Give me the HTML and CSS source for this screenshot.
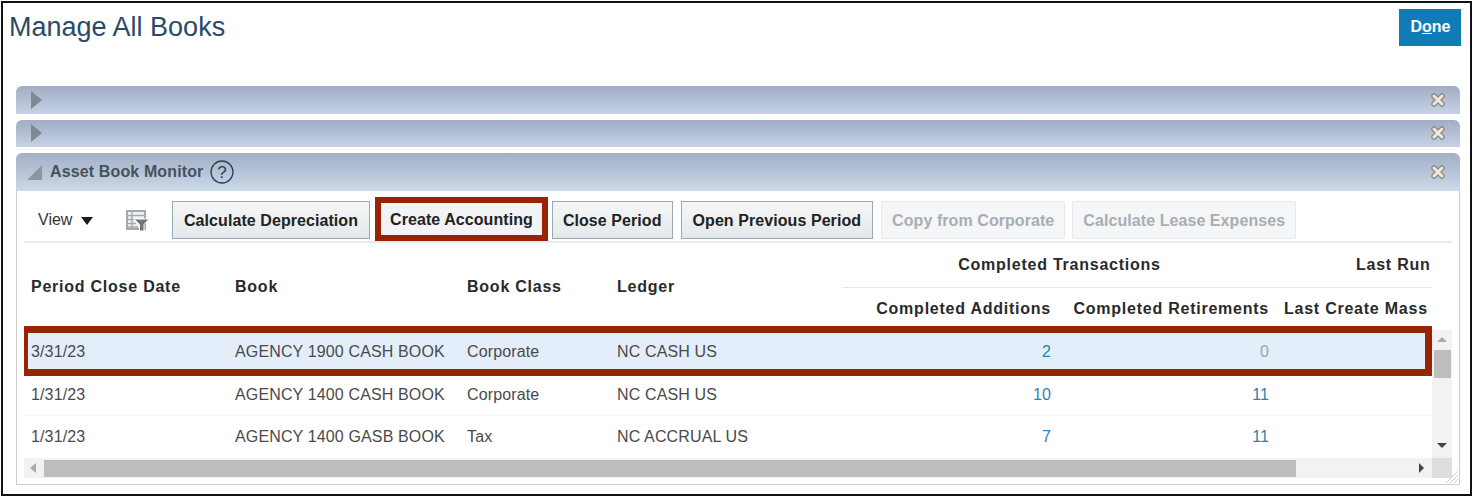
FILE: index.html
```html
<!DOCTYPE html>
<html lang="en">
<head>
    <meta charset="UTF-8">
    <title>Manage All Books</title>
    <link rel="stylesheet" href="styles.css">
</head>
<body>
    <div class="frame">
        <header class="page-head">
            <h1>Manage All Books</h1>
            <button class="done">D<u>o</u>ne</button>
        </header>

        <section class="panel collapsed">
            <div class="panel-bar">
                <svg class="expand" width="11" height="18" viewBox="0 0 11 18"><path d="M0 0L11 9L0 18Z"/></svg>
                <svg class="close" width="14" height="14" viewBox="0 0 14 14"><path class="edge" d="M3 3L11 11M11 3L3 11"/><path class="fill" d="M3 3L11 11M11 3L3 11"/></svg>
            </div>
        </section>
        <section class="panel collapsed">
            <div class="panel-bar">
                <svg class="expand" width="11" height="18" viewBox="0 0 11 18"><path d="M0 0L11 9L0 18Z"/></svg>
                <svg class="close" width="14" height="14" viewBox="0 0 14 14"><path class="edge" d="M3 3L11 11M11 3L3 11"/><path class="fill" d="M3 3L11 11M11 3L3 11"/></svg>
            </div>
        </section>

        <section class="panel open">
            <div class="panel-bar tall">
                <svg class="disclose" width="15" height="15" viewBox="0 0 15 15"><path d="M15 0V15H0Z"/></svg>
                <h2>Asset Book Monitor</h2>
                <svg class="help" width="24" height="24" viewBox="0 0 24 24">
                    <circle cx="12" cy="12" r="11"/>
                    <text x="12" y="18" text-anchor="middle">?</text>
                </svg>
                <svg class="close" width="14" height="14" viewBox="0 0 14 14"><path class="edge" d="M3 3L11 11M11 3L3 11"/><path class="fill" d="M3 3L11 11M11 3L3 11"/></svg>
            </div>

            <div class="panel-body">
                <div class="toolbar">
                    <span class="view">View <i class="caret"></i></span>
                    <svg class="filter" width="24" height="21" viewBox="0 0 24 21">
                        <path class="sheet" d="M1 1H19V19H1Z"/>
                        <path class="lines" d="M2 5.5H18M2 9.5H10M2 13.5H10M2 17H12M6 2V18"/>
                        <path class="funnel" d="M8 9H23L18 14.5V21H13.5V14.5Z"/>
                    </svg>
                    <button class="tool">Calculate Depreciation</button>
                    <span class="marked">
                        <button class="tool">Create Accounting</button>
                    </span>
                    <button class="tool tight">Close Period</button>
                    <button class="tool">Open Previous Period</button>
                    <button class="tool off">Copy from Corporate</button>
                    <button class="tool off">Calculate Lease Expenses</button>
                </div>

                <div class="grid">
                    <div class="table-clip">
                        <table>
                            <colgroup>
                                <col class="c-date"><col class="c-book"><col class="c-class"><col class="c-ledger">
                                <col class="c-num"><col class="c-num2"><col class="c-last">
                            </colgroup>
                            <thead>
                                <tr class="head-top">
                                    <th rowspan="2">Period Close Date</th>
                                    <th rowspan="2">Book</th>
                                    <th rowspan="2">Book Class</th>
                                    <th rowspan="2">Ledger</th>
                                    <th colspan="2" class="group">Completed Transactions</th>
                                    <th class="group last-run">Last Run</th>
                                </tr>
                                <tr class="head-sub">
                                    <th class="num">Completed Additions</th>
                                    <th class="num">Completed Retirements</th>
                                    <th>Last Create Mass</th>
                                </tr>
                            </thead>
                            <tbody>
                                <tr class="selected">
                                    <td>3/31/23</td><td>AGENCY 1900 CASH BOOK</td><td>Corporate</td><td>NC CASH US</td>
                                    <td class="num"><a href="#">2</a></td><td class="num zero">0</td><td></td>
                                </tr>
                                <tr>
                                    <td>1/31/23</td><td>AGENCY 1400 CASH BOOK</td><td>Corporate</td><td>NC CASH US</td>
                                    <td class="num"><a href="#">10</a></td><td class="num"><a href="#">11</a></td><td></td>
                                </tr>
                                <tr class="last-row">
                                    <td>1/31/23</td><td>AGENCY 1400 GASB BOOK</td><td>Tax</td><td>NC ACCRUAL US</td>
                                    <td class="num"><a href="#">7</a></td><td class="num"><a href="#">11</a></td><td></td>
                                </tr>
                            </tbody>
                        </table>
                        <div class="row-mark"></div>
                    </div>
                    <div class="vscroll">
                        <i class="arrow up"></i>
                        <div class="vthumb"></div>
                        <i class="arrow down"></i>
                    </div>
                    <div class="hscroll">
                        <i class="arrow left"></i>
                        <div class="hthumb"></div>
                        <i class="arrow right"></i>
                    </div>
                    <div class="corner"></div>
                </div>
                <svg class="grip" width="14" height="14" viewBox="0 0 14 14"><path d="M13 1L1 13M13 5L5 13M13 9L9 13"/></svg>
            </div>
        </section>
    </div>
</body>
</html>
```

FILE: styles.css
```css
* {
    box-sizing: border-box;
}

body {
    font-family: "Liberation Sans", Arial, sans-serif;
    background-color: #ffffff;
    margin: 0;
    height: 497px;
    overflow: hidden;
}

.frame {
    width: 1471px;
    height: 495px;
    margin: 1px 0 0 1px;
    border: 2px solid #111111;
    padding: 6px 10px 0 13px;
}

.page-head {
    display: flex;
    justify-content: space-between;
    height: 77px;
}

h1 {
    margin: 3px 0 0 -7px;
    font-size: 27px;
    font-weight: normal;
    line-height: 30px;
    color: #2b4a68;
}

.done {
    width: 62px;
    height: 37px;
    margin: 0 -1px 0 0;
    padding: 0 0 2px 1px;
    background-color: #0f7cb5;
    color: #ffffff;
    border: none;
    font-family: inherit;
    font-size: 16px;
    font-weight: bold;
}

.panel {
    margin-bottom: 6px;
}

.panel-bar {
    display: flex;
    align-items: center;
    height: 27.5px;
    padding: 0 15px 0 15px;
    border-radius: 6px 6px 0 0;
    background: linear-gradient(#a2afc6, #cbd9e8);
}

.panel.collapsed .panel-bar {
    background: linear-gradient(#a0adc5, #c6d2e4);
}

.panel-bar.tall {
    height: 38px;
    padding-left: 11px;
}

.expand {
    fill: #7d8a92;
}

.disclose {
    fill: #8d969d;
}

.panel-bar h2 {
    margin: 0 7px 0 8px;
    font-size: 16px;
    font-weight: bold;
    letter-spacing: 0.13px;
    color: #46525c;
}

.help circle {
    fill: none;
    stroke: #2b4157;
    stroke-width: 1.3;
}

.help text {
    font-size: 17px;
    fill: #2b4157;
}

.close {
    margin-left: auto;
    overflow: visible;
}

.close path {
    fill: none;
    stroke-linecap: round;
}

.close .edge {
    stroke: #8b8a80;
    stroke-width: 5.5;
}

.close .fill {
    stroke: #eee9dc;
    stroke-width: 3;
}

.panel-body {
    position: relative;
    height: 294px;
    border: 1px solid #cccccc;
    border-top: none;
    padding: 0 7px;
}

.toolbar {
    display: flex;
    align-items: center;
    height: 52px;
    padding-top: 8px;
    border-bottom: 2px solid #e8ebed;
}

.view {
    margin-left: 14px;
    font-size: 16px;
    color: #333333;
    width: 88px;
}

.caret {
    display: inline-block;
    margin-left: 4px;
    border-left: 6.5px solid transparent;
    border-right: 6.5px solid transparent;
    border-top: 8px solid #1c1c1c;
}

.filter {
    margin-right: 22px;
}

.filter .sheet {
    fill: #f1f2f3;
    stroke: #a3a8ac;
    stroke-width: 2;
}

.filter .lines {
    fill: none;
    stroke: #a3a8ac;
    stroke-width: 1.3;
}

.filter .funnel {
    fill: #6f767c;
    stroke: #ffffff;
    stroke-width: 1;
}

.tool {
    height: 38px;
    margin-right: 8px;
    padding: 2px 11px 0;
    font-family: inherit;
    font-size: 16px;
    font-weight: bold;
    letter-spacing: 0.07px;
    color: #222222;
    border: 1px solid #9da9b1;
    background: linear-gradient(#f6f7f7, #e4e8ea);
}

.tool.tight {
    padding: 2px 10px 0;
}

.tool.off {
    color: #a8aeb3;
    border-color: #e6e8ea;
    background: #f4f6f7;
    border-radius: 2px;
    padding: 2px 10px 0;
    margin-right: 7px;
}

.marked {
    display: flex;
    align-items: center;
    height: 44px;
    margin: -2px 4px 0 -3px;
    border: 6px solid #972405;
}

.marked .tool {
    height: 32px;
    margin: 0;
    padding: 2px 9px 0;
    border: none;
    background: #f1f3f4;
}

.grid {
    display: grid;
    grid-template-columns: 1408px 20px;
    grid-template-rows: 215px 20px;
}

.table-clip {
    position: relative;
    overflow: hidden;
}

table {
    width: 1627px;
    table-layout: fixed;
    border-collapse: collapse;
    font-size: 16px;
    letter-spacing: 0.14px;
    color: #4a4a4a;
}

.c-date { width: 204px; }
.c-book { width: 232px; }
.c-class { width: 150px; }
.c-ledger { width: 232px; }
.c-num { width: 217px; }
.c-num2 { width: 218px; }
.c-last { width: 374px; }

th {
    padding: 0 0 0 7px;
    font-weight: bold;
    letter-spacing: 0.76px;
    text-align: left;
    color: #2a2a2a;
    white-space: nowrap;
}

.head-top th {
    height: 44px;
}

.head-sub th {
    height: 43px;
}

th.group {
    text-align: center;
    border-bottom: 1px solid #e6e8ea;
    padding: 0;
}

th.last-run {
    text-align: left;
    padding-left: 79px;
}

td {
    height: 42px;
    padding: 2px 0 0 7px;
    border-bottom: 1px solid #f2f3f4;
    white-space: nowrap;
}

td.num {
    padding: 2px 8px 0 0;
}

.selected td,
.last-row td {
    height: 43px;
}

.last-row td {
    padding-top: 0;
}

.last-row td.num {
    padding-top: 0;
}

.num {
    text-align: right;
    padding: 0 8px 0 0;
}

td a {
    color: #2f82ab;
    text-decoration: none;
}

.zero {
    color: #9aa3a9;
}

.selected td {
    background-color: #e3eefa;
}

.row-mark {
    position: absolute;
    left: -3px;
    top: 83px;
    width: 1411px;
    height: 50px;
    border: 7px solid #972405;
}

.vscroll {
    display: flex;
    flex-direction: column;
    align-items: center;
    margin-top: 87px;
    padding-top: 7px;
    background-color: #f2f2f2;
}

.vthumb {
    width: 17px;
    height: 28px;
    margin-top: 8px;
    background-color: #bdbdbd;
}

.hscroll {
    display: flex;
    align-items: center;
    background-color: #f2f2f2;
}

.hthumb {
    width: 1252px;
    height: 17px;
    margin-left: 8px;
    background-color: #bdbdbd;
}

.corner {
    background-color: #dedede;
}

.grip {
    position: absolute;
    right: 0;
    bottom: 0;
}

.grip path {
    fill: none;
    stroke: #cfcfcf;
    stroke-width: 1;
}

.arrow {
    display: block;
    width: 0;
    height: 0;
}

.arrow.up {
    border-left: 5px solid transparent;
    border-right: 5px solid transparent;
    border-bottom: 5px solid #a9a9a9;
}

.arrow.down {
    margin-top: 65px;
    border-left: 5px solid transparent;
    border-right: 5px solid transparent;
    border-top: 5px solid #444444;
}

.arrow.left {
    margin-left: 6px;
    border-top: 5.5px solid transparent;
    border-bottom: 5.5px solid transparent;
    border-right: 6px solid #a9a9a9;
}

.arrow.right {
    margin-left: 123px;
    border-top: 5.5px solid transparent;
    border-bottom: 5.5px solid transparent;
    border-left: 5px solid #444444;
}
```
